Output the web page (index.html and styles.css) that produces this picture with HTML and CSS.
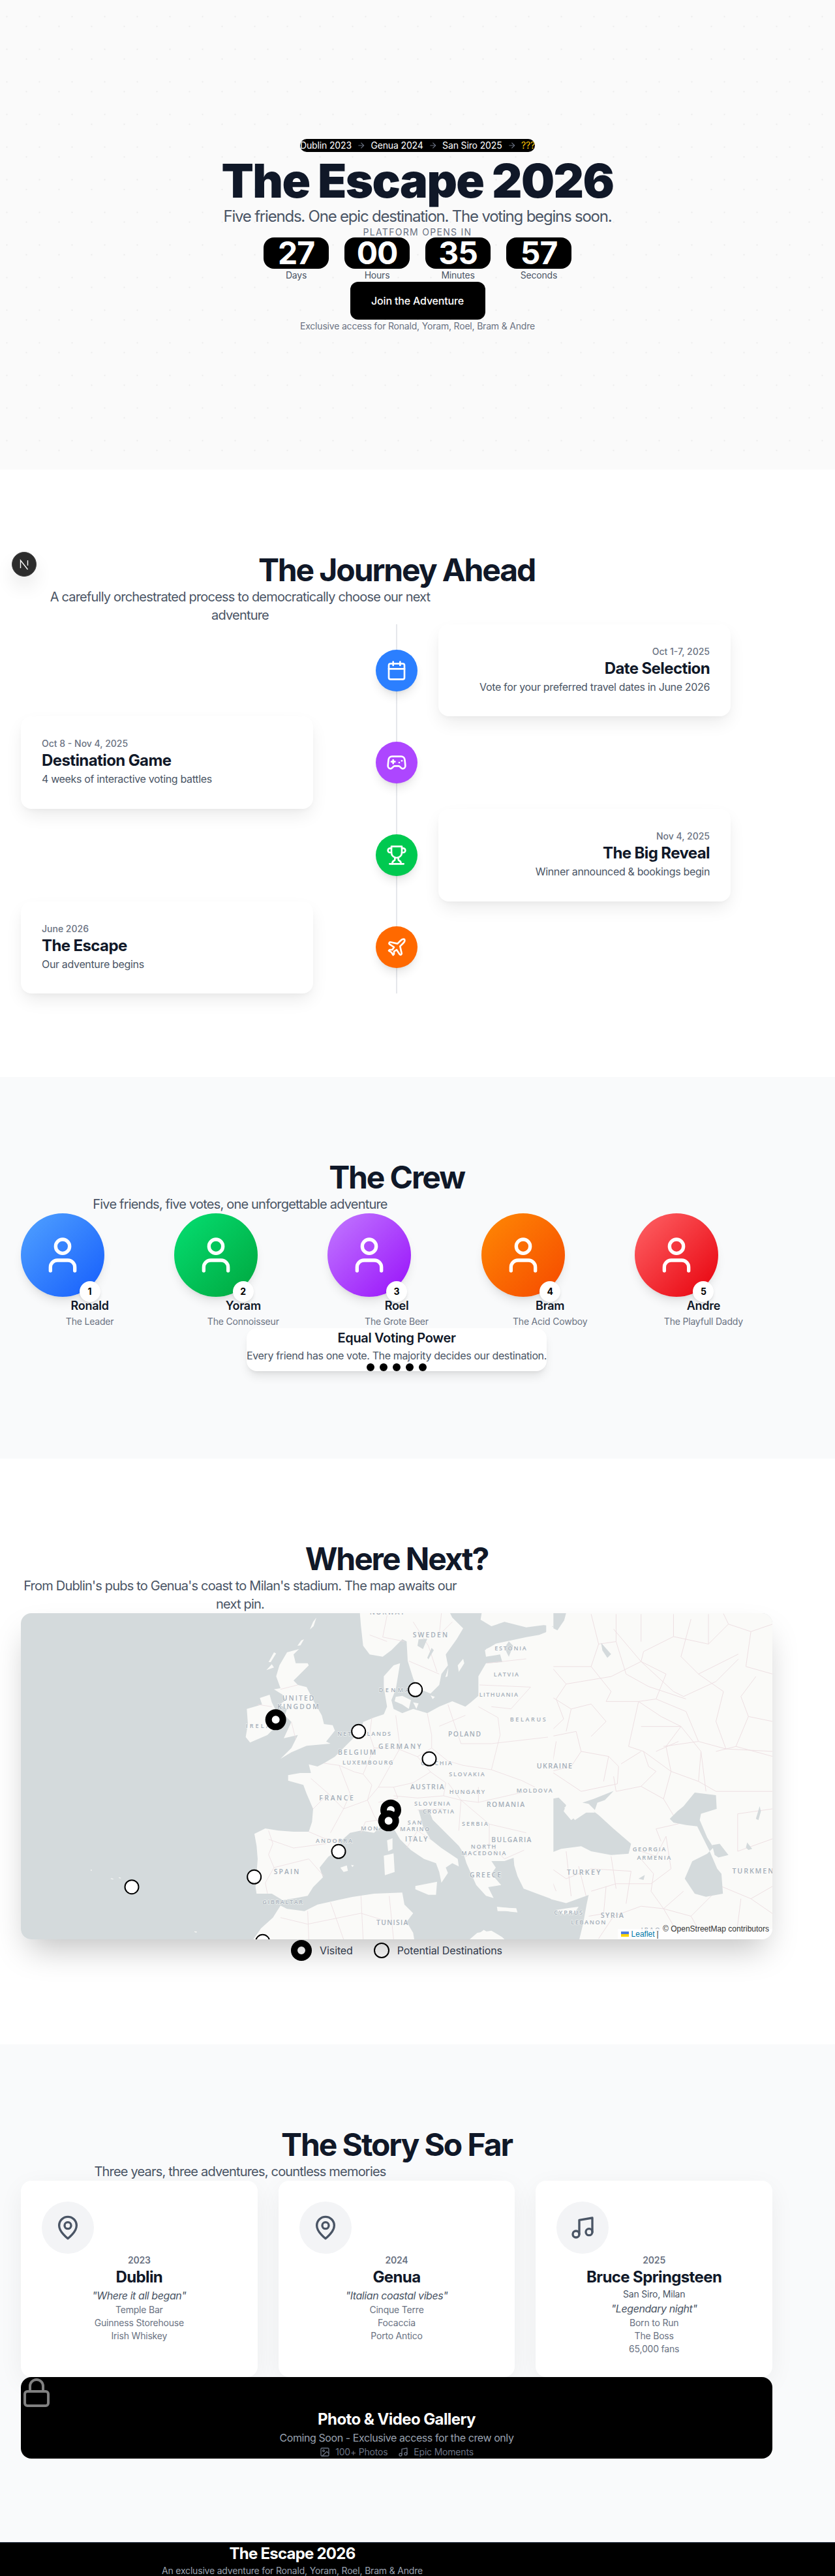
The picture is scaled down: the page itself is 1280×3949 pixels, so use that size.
FILE: index.html
```html
<!DOCTYPE html>
<html lang="en">
<head>
<meta charset="utf-8">
<title>The Escape 2026</title>
<link rel="stylesheet" href="styles.css">
</head>
<body>
<section class="hero">
  <div class="trail">
    <span>Dublin 2023</span>
    <svg class="ico arrow" viewBox="0 0 24 24"><path d="M5 12h14"/><path d="m12 5 7 7-7 7"/></svg>
    <span>Genua 2024</span>
    <svg class="ico arrow" viewBox="0 0 24 24"><path d="M5 12h14"/><path d="m12 5 7 7-7 7"/></svg>
    <span>San Siro 2025</span>
    <svg class="ico arrow" viewBox="0 0 24 24"><path d="M5 12h14"/><path d="m12 5 7 7-7 7"/></svg>
    <span class="unknown">???</span>
  </div>
  <h1>The Escape 2026</h1>
  <p class="tagline">Five friends. One epic destination. The voting begins soon.</p>
  <p class="opens">PLATFORM OPENS IN</p>
  <div class="countdown">
    <div class="unit"><div class="num">27</div><div class="unit-label">Days</div></div>
    <div class="unit"><div class="num">00</div><div class="unit-label">Hours</div></div>
    <div class="unit"><div class="num">35</div><div class="unit-label">Minutes</div></div>
    <div class="unit"><div class="num">57</div><div class="unit-label">Seconds</div></div>
  </div>
  <a class="cta">Join the Adventure</a>
  <p class="exclusive">Exclusive access for Ronald, Yoram, Roel, Bram &amp; Andre</p>
</section>

<div class="next-badge">
  <svg viewBox="0 0 38 38"><path d="M13.5 25V13l11 14M24.5 13v8" /></svg>
</div>

<section class="section journey">
  <h2>The Journey Ahead</h2>
  <p class="sub">A carefully orchestrated process to democratically choose our next adventure</p>
  <div class="timeline">
    <div class="row">
      <div class="blank"></div>
      <div class="node n-blue"><svg class="ico" viewBox="0 0 24 24"><path d="M8 2v4"/><path d="M16 2v4"/><rect width="18" height="18" x="3" y="4" rx="2"/><path d="M3 10h18"/></svg></div>
      <div class="tcard right"><div class="tdate">Oct 1-7, 2025</div><h3>Date Selection</h3><p>Vote for your preferred travel dates in June 2026</p></div>
    </div>
    <div class="row">
      <div class="tcard"><div class="tdate">Oct 8 - Nov 4, 2025</div><h3>Destination Game</h3><p>4 weeks of interactive voting battles</p></div>
      <div class="node n-purple"><svg class="ico" viewBox="0 0 24 24"><path d="M6 11h4"/><path d="M8 9v4"/><path d="M15 12h.01"/><path d="M18 10h.01"/><path d="M17.32 5H6.68a4 4 0 0 0-3.978 3.59c-.006.052-.01.101-.017.152C2.604 9.416 2 14.456 2 16a3 3 0 0 0 3 3c1 0 1.5-.5 2-1l1.414-1.414A2 2 0 0 1 9.828 16h4.344a2 2 0 0 1 1.414.586L17 18c.5.5 1 1 2 1a3 3 0 0 0 3-3c0-1.545-.604-6.584-.685-7.258-.007-.05-.011-.1-.017-.151A4 4 0 0 0 17.32 5z"/></svg></div>
      <div class="blank"></div>
    </div>
    <div class="row">
      <div class="blank"></div>
      <div class="node n-green"><svg class="ico" viewBox="0 0 24 24"><path d="M6 9H4.5a2.5 2.5 0 0 1 0-5H6"/><path d="M18 9h1.5a2.5 2.5 0 0 0 0-5H18"/><path d="M4 22h16"/><path d="M10 14.66V17c0 .55-.47.98-.97 1.21C7.85 18.75 7 20.24 7 22"/><path d="M14 14.66V17c0 .55.47.98.97 1.21C16.15 18.75 17 20.24 17 22"/><path d="M18 2H6v7a6 6 0 0 0 12 0V2Z"/></svg></div>
      <div class="tcard right"><div class="tdate">Nov 4, 2025</div><h3>The Big Reveal</h3><p>Winner announced &amp; bookings begin</p></div>
    </div>
    <div class="row">
      <div class="tcard"><div class="tdate">June 2026</div><h3>The Escape</h3><p>Our adventure begins</p></div>
      <div class="node n-orange"><svg class="ico" viewBox="0 0 24 24"><path d="M17.8 19.2 16 11l3.5-3.5C21 6 21.5 4 21 3c-1-.5-3 0-4.5 1.5L13 8 4.8 6.2c-.5-.1-.9.1-1.1.5l-.3.5c-.2.5-.1 1 .3 1.3L9 12l-2 3H4l-1 1 3 2 2 3 1-1v-3l3-2 3.5 5.3c.3.4.8.5 1.3.3l.5-.2c.4-.3.6-.7.5-1.2z"/></svg></div>
      <div class="blank"></div>
    </div>
  </div>
</section>

<section class="section tint">
  <h2>The Crew</h2>
  <p class="sub">Five friends, five votes, one unforgettable adventure</p>
  <div class="crew">
    <div class="member"><div class="avatar a-blue"><svg class="ico" viewBox="0 0 24 24"><path d="M19 21v-2a4 4 0 0 0-4-4H9a4 4 0 0 0-4 4v2"/><circle cx="12" cy="7" r="4"/></svg></div><div class="badge">1</div><div class="mname">Ronald</div><div class="mrole">The Leader</div></div>
    <div class="member"><div class="avatar a-green"><svg class="ico" viewBox="0 0 24 24"><path d="M19 21v-2a4 4 0 0 0-4-4H9a4 4 0 0 0-4 4v2"/><circle cx="12" cy="7" r="4"/></svg></div><div class="badge">2</div><div class="mname">Yoram</div><div class="mrole">The Connoisseur</div></div>
    <div class="member"><div class="avatar a-purple"><svg class="ico" viewBox="0 0 24 24"><path d="M19 21v-2a4 4 0 0 0-4-4H9a4 4 0 0 0-4 4v2"/><circle cx="12" cy="7" r="4"/></svg></div><div class="badge">3</div><div class="mname">Roel</div><div class="mrole">The Grote Beer</div></div>
    <div class="member"><div class="avatar a-orange"><svg class="ico" viewBox="0 0 24 24"><path d="M19 21v-2a4 4 0 0 0-4-4H9a4 4 0 0 0-4 4v2"/><circle cx="12" cy="7" r="4"/></svg></div><div class="badge">4</div><div class="mname">Bram</div><div class="mrole">The Acid Cowboy</div></div>
    <div class="member"><div class="avatar a-red"><svg class="ico" viewBox="0 0 24 24"><path d="M19 21v-2a4 4 0 0 0-4-4H9a4 4 0 0 0-4 4v2"/><circle cx="12" cy="7" r="4"/></svg></div><div class="badge">5</div><div class="mname">Andre</div><div class="mrole">The Playfull Daddy</div></div>
  </div>
  <div class="voting">
    <h3>Equal Voting Power</h3>
    <p>Every friend has one vote. The majority decides our destination.</p>
    <div class="dots"><i></i><i></i><i></i><i></i><i></i></div>
  </div>
</section>

<section class="section">
  <h2>Where Next?</h2>
  <p class="sub">From Dublin's pubs to Genua's coast to Milan's stadium. The map awaits our next pin.</p>
  <div class="map">
    <svg class="map-svg" viewBox="0 0 1152 500">
      <rect class="water" width="1152" height="500"/>
      <!-- eastern half, traced at 0.3827 scale -->
      <g transform="translate(568,-33) scale(.3827)">
        <rect class="land" x="620" y="80" width="920" height="1320"/>
        <g class="lines">
          <path d="M627 570 690 510 660 430 700 370 640 300 600 250"/><path d="M640 580 740 560 760 640 870 660 910 700 905 770 760 800"/>
          <path d="M700 370 880 340 1000 280 1010 240 1130 180"/><path d="M860 440 990 440 1080 500 1160 540 1100 620 1120 720"/><path d="M1090 620 1230 600 1340 630 1527 640"/>
          <path d="M640 300 800 300 880 400 860 440"/><path d="M890 150 1000 280 1130 400 1170 420 1300 360 1390 270"/>
          <path d="M990 440 950 620 1010 640 1030 700 1060 720 1000 780"/><path d="M1120 720 1090 830 1150 930"/><path d="M1300 640 1380 620 1430 500 1400 420 1460 340"/>
          <path d="M1240 640 1260 800"/><path d="M1380 620 1527 660"/><path d="M1387 890 1527 870"/><path d="M1387 890 1387 1040 1527 990"/><path d="M1300 800 1527 800"/>
          <path d="M1000 1040 1060 1060 1100 980"/><path d="M990 1060 1050 1130 1040 1200 1090 1270 1170 1200"/><path d="M800 1200 900 1170 1040 1170"/><path d="M1320 1180 1440 1230 1527 1290"/>
          <path d="M860 1180 850 1290 790 1300"/><path d="M830 1390 890 1300 1000 1260 1090 1270 1160 1390"/><path d="M600 1080 700 1150 800 1110 960 1120"/><path d="M700 1040 720 1220"/><path d="M880 1060 900 1190"/>
          <path d="M900 200 940 330 1030 380 1180 430"/><path d="M1200 110 1160 260 1230 330 1390 250"/><path d="M1000 540 1160 540 1240 640"/>
          <path d="M640 420 720 470 800 450 860 520 800 580"/><path d="M720 470 700 560"/><path d="M800 300 830 210 900 200"/><path d="M1000 280 1100 330 1060 430 990 440"/><path d="M1060 430 1180 480 1230 600"/><path d="M1230 330 1330 400 1300 520 1340 630"/>
          <path d="M1130 180 1270 210 1350 130 1440 160 1527 130"/><path d="M1350 130 1330 88"/><path d="M1440 160 1420 300 1527 330"/><path d="M1000 90 1000 200"/><path d="M800 90 830 210"/><path d="M900 90 900 200"/><path d="M1130 90 1130 180"/><path d="M1270 90 1270 210"/>
          <path d="M1430 500 1527 520"/><path d="M1120 720 1230 760 1300 800"/><path d="M1230 760 1240 640"/><path d="M1090 830 1000 780 900 800 890 740"/><path d="M1150 930 1060 950 1080 1000"/><path d="M660 600 640 720 700 760 760 800"/><path d="M760 640 720 700 640 720"/><path d="M870 660 850 760"/>
          <path d="M1000 640 920 690"/><path d="M620 1100 660 1200"/><path d="M750 1100 780 1220"/><path d="M960 1120 940 1250"/><path d="M1040 1170 1120 1110 1100 980"/><path d="M1090 1270 1200 1300 1320 1180"/><path d="M1200 1300 1250 1390"/><path d="M1400 1230 1380 1390"/><path d="M1440 1230 1527 1180"/><path d="M1150 600 1060 640"/><path d="M1010 640 1120 720"/>
        </g>
        <path class="water" d="M555 1000 575 930 590 900 640 830 670 825 700 855 690 880 720 915 760 885 810 880 830 895 890 950 960 1010 950 1050 880 1055 800 1040 760 1020 680 1030 630 1050 560 1040Z"/>
        <path class="land" d="M692 865 740 845 790 855 815 885 780 885 735 915 715 890Z"/>
        <path class="water" d="M765 845 810 830 890 798 855 835 825 845 815 875 790 850Z"/>
        <path class="water" d="M1115 910 1145 880 1170 860 1215 805 1300 815 1303 870 1240 890 1235 915 1265 985 1290 1025 1265 1050 1205 1080 1175 1150 1215 1210 1260 1222 1328 1210 1322 1130 1305 1110 1275 1040 1225 940 1180 935 1130 925Z"/>
        <path class="water" d="M1285 1015 1315 1010 1350 1055 1310 1065 1295 1055Z"/>
        <path class="water" d="M1425 1005 1445 1030 1430 1035 1420 1025Z"/>
        <path class="water" d="M1475 860 1460 910 1470 915 1480 880Z"/>
        <path class="water" d="M640 85 700 85 692 115 665 155 645 145Z"/>
        <path class="water" d="M840 205 880 250 865 265 845 235Z"/>
        <path class="water" d="M530 1068 600 1058 590 1075 540 1082Z"/>
        <path class="water" d="M600 1195 640 1232 700 1248 790 1215 782 1252 768 1330 752 1396 480 1396 480 1195Z"/>
        <path class="land" d="M660 1275 705 1268 750 1262 735 1285 690 1292Z"/>
        <path class="land" d="M425 1265 500 1268 505 1285 460 1280 425 1280Z"/>
        <path class="land" d="M315 1396 370 1355 440 1396Z"/>
        <path class="water" d="M990 1150 1015 1135 1010 1155Z"/>
      </g>
      <!-- western half, traced at one third scale -->
      <g transform="translate(308,0) scale(.33333)">
        <path class="land" d="M1525 60 1490 88 1460 100 1400 110 1330 125 1260 140 1210 170 1215 200 1280 190 1290 225 1215 230 1180 290 1180 380 1145 410 1120 430 1060 405 1000 430 945 460 880 440 830 460 790 440 780 400 800 350 810 290 820 230 790 240 745 290 745 340 760 430 745 465 700 480 650 500 640 540 570 610 520 660 470 690 440 705 400 695 410 735 360 735 305 745 305 770 375 790 390 830 420 900 415 960 400 1005 330 1005 260 1000 200 990 150 1015 160 1070 165 1130 155 1260 160 1290 230 1290 280 1320 340 1310 395 1300 420 1260 465 1215 450 1170 490 1120 540 1090 545 1050 590 1010 640 1000 700 1010 730 980 790 990 820 1040 870 1090 930 1130 985 1150 1000 1190 1010 1240 1040 1195 1030 1170 1060 1150 1090 1165 1085 1130 1010 1080 960 1040 925 980 915 940 905 905 950 900 970 950 1030 1010 1090 1070 1110 1100 1125 1150 1170 1250 1215 1300 1250 1310 1225 1260 1285 1250 1240 1200 1260 1170 1240 1140 1300 1140 1342 1125 1345 1160 1360 1210 1388 1267 1450 1290 1525 1318Z"/>
        <path class="land" d="M1195 0 1190 30 1240 60 1300 40 1400 65 1480 55 1525 60 1525 0Z"/>
        <path class="land" d="M635 0 640 60 650 150 680 190 740 200 780 170 830 120 850 130 855 220 880 300 900 345 960 370 1000 330 1010 280 1040 240 1030 190 1080 120 1110 70 1060 20 1050 0Z"/>
        <path class="land" d="M110 570 120 510 115 440 185 420 175 390 220 375 230 410 255 460 248 490 240 530 210 560 130 595Z"/>
        <path class="land" d="M355 165 300 180 265 240 250 290 270 345 240 350 280 375 295 400 265 420 300 440 290 470 320 500 285 575 350 560 320 620 270 670 320 640 390 610 500 600 480 590 520 540 510 515 470 510 460 470 420 400 390 340 350 330 330 310 400 240 395 230 340 230 330 190Z"/>
        <path class="land" d="M890 1255 990 1235 985 1295 950 1295 890 1270Z"/>
        <path class="land" d="M745 1115 790 1105 795 1190 750 1205Z"/>
        <path class="land" d="M760 1045 785 1035 785 1085 765 1095Z"/>
        <path class="land" d="M545 1170 575 1160 580 1185 560 1190Z"/>
        <path class="land" d="M595 1157 608 1160 600 1168Z"/>
        <path class="land" d="M1085 240 1110 210 1115 230 1090 270Z"/>
        <path class="land" d="M1028 295 1042 250 1038 290Z"/>
        <path class="land" d="M1215 165 1250 150 1255 165 1220 195Z"/>
        <path class="land" d="M830 380 870 400 860 440 830 420 795 405 800 385Z"/>
        <path class="land" d="M880 410 905 415 895 440Z"/>
        <path class="land" d="M960 378 980 385 970 395Z"/>
        <path class="land" d="M405 75 420 40 435 20 422 60Z"/>
        <path class="land" d="M348 150 365 125 378 120 362 148Z"/>
        <path class="land" d="M215 225 240 180 250 185 225 225Z"/>
        <path class="land" d="M205 262 230 235 240 250Z"/>
        <path class="land" d="M145 1500 180 1450 235 1400 270 1345 300 1360 380 1370 440 1340 530 1320 600 1305 700 1290 830 1285 840 1340 880 1380 850 1420 880 1470 885 1500Z"/>
        <path class="land" d="M1140 1500 1175 1470 1240 1460 1290 1490 1300 1500Z"/>
        <path class="land" d="M1265 1350 1340 1358 1345 1375 1300 1368 1268 1365Z"/>
        <path class="land" d="M-603 1180h5v4h-5Z"/><path class="land" d="M-510 1219l12 3-2 3-11-3Z"/><path class="land" d="M-472 1214l9 4-4 2-7-3Z"/><path class="land" d="M-126 1463l12 2-3 4-9-3Z"/>
        <g class="lines">
          <path d="M400 1005 470 1035 545 1050"/><path d="M215 1000 235 1060 215 1110 240 1170 200 1240 210 1290"/><path d="M215 1040 330 1080 480 1060"/><path d="M240 1170 400 1130 470 1210"/>
          <path d="M470 690 540 700 610 730 650 740 690 790 670 860 700 930 730 980"/><path d="M410 760 490 830 420 900"/><path d="M490 830 560 900 500 1010"/><path d="M560 900 670 860"/><path d="M540 700 590 830 560 900"/>
          <path d="M690 480 680 560 700 620 650 740"/><path d="M945 460 965 560 965 620 900 660 960 730 880 780 790 800"/><path d="M700 620 800 620 900 660"/><path d="M800 470 820 620 720 800"/>
          <path d="M670 860 720 800 790 800 810 850 720 870"/><path d="M790 840 900 850 1020 840 1030 780 960 730"/><path d="M965 620 1040 680 1110 700 1240 720"/><path d="M1180 430 1270 480 1280 560 1240 720"/>
          <path d="M1185 330 1420 340"/><path d="M1220 230 1400 210"/><path d="M1240 430 1330 440 1420 340"/><path d="M1240 600 1500 570"/><path d="M1240 720 1380 770 1440 800"/><path d="M1180 800 1180 870 1100 860 1040 780"/>
          <path d="M1100 860 1230 970 1400 1010"/><path d="M1230 970 1230 1060 1120 1120"/><path d="M1230 1060 1300 1130 1390 1090"/><path d="M1020 840 1100 860 1090 1000"/><path d="M1180 870 1400 820"/><path d="M900 905 1020 900"/>
          <path d="M395 1370 400 1500"/><path d="M770 1300 790 1500"/><path d="M270 1400 395 1430 640 1380 770 1420"/><path d="M500 1330 560 1500"/><path d="M640 1300 650 1500"/>
          <path d="M760 10 740 110 840 130"/><path d="M680 100 760 130"/><path d="M880 40 950 150 990 270"/><path d="M860 220 1000 280"/><path d="M1010 0 1000 100 1060 40"/>
          <path d="M270 350 350 330"/><path d="M320 500 340 580"/><path d="M165 420 230 430"/><path d="M1040 420 1100 600 1240 600"/><path d="M1000 520 1120 470"/><path d="M850 1080 900 1000 960 1040"/><path d="M640 1010 660 960 730 950"/>
        </g>
        <path class="water" d="M905 120 945 118 925 165 900 150Z"/>
        <path class="water" d="M965 160 975 170 950 212 945 205Z"/>
        <path class="water" d="M1300 160 1320 130 1340 150 1320 200Z"/>
        <g class="labels">
          <text x="680" y="6" textLength="160">NORWAY</text>
          <text x="878" y="110" textLength="160">SWEDEN</text>
          <text class="s" x="1255" y="170" textLength="145">ESTONIA</text>
          <text class="s" x="1250" y="291" textLength="115">LATVIA</text>
          <text class="s" x="1184" y="384" textLength="178">LITHUANIA</text>
          <text class="s" x="1325" y="497" textLength="165">BELARUS</text>
          <text class="s" x="722" y="363" textLength="195">DENMARK</text>
          <text x="278" y="403" textLength="146">UNITED</text>
          <text x="256" y="441" textLength="190">KINGDOM</text>
          <text class="s" x="110" y="527" textLength="172">IRELAND</text>
          <text class="s" x="532" y="563" textLength="245">NETHERLANDS</text>
          <text x="720" y="625" textLength="197">GERMANY</text>
          <text x="534" y="652" textLength="175">BELGIUM</text>
          <text class="s" x="555" y="695" textLength="232">LUXEMBOURG</text>
          <text x="1041" y="566" textLength="150">POLAND</text>
          <text class="s" x="915" y="699" textLength="143">CZECHIA</text>
          <text class="s" x="1045" y="751" textLength="163">SLOVAKIA</text>
          <text x="867" y="811" textLength="155">AUSTRIA</text>
          <text class="s" x="1046" y="831" textLength="163">HUNGARY</text>
          <text class="s" x="1355" y="826" textLength="165">MOLDOVA</text>
          <text x="448" y="861" textLength="157">FRANCE</text>
          <text class="s" x="885" y="884" textLength="165">SLOVENIA</text>
          <text class="s" x="924" y="921" textLength="144">CROATIA</text>
          <text x="1218" y="891" textLength="174">ROMANIA</text>
          <text class="s" x="1104" y="978" textLength="120">SERBIA</text>
          <text class="s" x="854" y="973" textLength="66">SAN</text>
          <text class="s" x="820" y="1003" textLength="135">MARINO</text>
          <text class="s" x="640" y="999" textLength="150">MONACO</text>
          <text x="843" y="1050" textLength="103">ITALY</text>
          <text class="s" x="432" y="1055" textLength="168">ANDORRA</text>
          <text x="239" y="1201" textLength="116">SPAIN</text>
          <text x="1240" y="1052" textLength="183">BULGARIA</text>
          <text class="s" x="1145" y="1082" textLength="116">NORTH</text>
          <text class="s" x="1102" y="1112" textLength="204">MACEDONIA</text>
          <text x="1140" y="1215" textLength="144">GREECE</text>
          <text class="s" x="187" y="1338" textLength="185">GIBRALTAR</text>
          <text x="711" y="1434" textLength="145">TUNISIA</text>
        </g>
        <g class="pins">
          <circle cx="890" cy="352" r="31.5"/>
          <circle cx="629" cy="544" r="31.5"/>
          <circle cx="954" cy="670" r="31.5"/>
          <circle cx="537" cy="1096" r="31.5"/>
          <circle cx="149" cy="1213" r="31.5"/>
          <circle cx="188" cy="1510" r="31.5"/>
          <circle cx="-414" cy="1259" r="31.5"/>
        </g>
        <g class="pins visited">
          <circle cx="248" cy="490" r="33"/>
          <circle cx="777" cy="905" r="33"/>
          <circle cx="767" cy="955" r="33"/>
        </g>
      </g>
      <g transform="translate(568,-33) scale(.3827)" class="labels east">
        <text x="582" y="707" textLength="142">UKRAINE</text>
        <text x="703" y="1133" textLength="135">TURKEY</text>
        <text class="s" x="966" y="1040" textLength="132">GEORGIA</text>
        <text class="s" x="984" y="1075" textLength="135">ARMENIA</text>
        <text class="s" x="651" y="1293" textLength="115">CYPRUS</text>
        <text x="838" y="1306" textLength="92">SYRIA</text>
        <text class="s" x="719" y="1333" textLength="139">LEBANON</text>
        <text class="s" x="1000" y="1362" textLength="75">IRAQ</text>
        <text x="1365" y="1130" textLength="270">TURKMENISTAN</text>
      </g>
    </svg>
    <div class="attrib">
      <svg class="flag" viewBox="0 0 12 8"><rect width="12" height="4" fill="#4C7BE1"/><rect y="4" width="12" height="4" fill="#FFD500"/></svg>
      <a>Leaflet</a> <span class="sep">|</span> © OpenStreetMap contributors
    </div>
  </div>
  <div class="legend">
    <span class="ring ring-visited"></span><span class="ltext">Visited</span>
    <span class="ring ring-open"></span><span class="ltext">Potential Destinations</span>
  </div>
</section>

<section class="section tint">
  <h2>The Story So Far</h2>
  <p class="sub">Three years, three adventures, countless memories</p>
  <div class="story">
    <article class="scard">
      <div class="sicon"><svg class="ico" viewBox="0 0 24 24"><path d="M20 10c0 6-8 12-8 12s-8-6-8-12a8 8 0 0 1 16 0Z"/><circle cx="12" cy="10" r="3"/></svg></div>
      <div class="syear">2023</div><h3>Dublin</h3><div class="squote">"Where it all began"</div>
      <div class="sitem">Temple Bar</div><div class="sitem">Guinness Storehouse</div><div class="sitem">Irish Whiskey</div>
    </article>
    <article class="scard">
      <div class="sicon"><svg class="ico" viewBox="0 0 24 24"><path d="M20 10c0 6-8 12-8 12s-8-6-8-12a8 8 0 0 1 16 0Z"/><circle cx="12" cy="10" r="3"/></svg></div>
      <div class="syear">2024</div><h3>Genua</h3><div class="squote">"Italian coastal vibes"</div>
      <div class="sitem">Cinque Terre</div><div class="sitem">Focaccia</div><div class="sitem">Porto Antico</div>
    </article>
    <article class="scard">
      <div class="sicon"><svg class="ico" viewBox="0 0 24 24"><path d="M9 18V5l12-2v13"/><circle cx="6" cy="18" r="3"/><circle cx="18" cy="16" r="3"/></svg></div>
      <div class="syear">2025</div><h3>Bruce Springsteen</h3><div class="splace">San Siro, Milan</div><div class="squote">"Legendary night"</div>
      <div class="sitem">Born to Run</div><div class="sitem">The Boss</div><div class="sitem">65,000 fans</div>
    </article>
  </div>
  <div class="gallery">
    <svg class="ico lock" viewBox="0 0 24 24"><rect width="18" height="11" x="3" y="11" rx="2"/><path d="M7 11V7a5 5 0 0 1 10 0v4"/></svg>
    <h3>Photo &amp; Video Gallery</h3>
    <p>Coming Soon - Exclusive access for the crew only</p>
    <div class="gmeta">
      <span><svg class="ico" viewBox="0 0 24 24"><rect width="18" height="18" x="3" y="3" rx="2"/><circle cx="9" cy="9" r="2"/><path d="m21 15-3.086-3.086a2 2 0 0 0-2.828 0L6 21"/></svg>100+ Photos</span>
      <span><svg class="ico" viewBox="0 0 24 24"><path d="M9 18V5l12-2v13"/><circle cx="6" cy="18" r="3"/><circle cx="18" cy="16" r="3"/></svg>Epic Moments</span>
    </div>
  </div>
</section>

<footer class="footer">
  <div class="finner">
    <h3>The Escape 2026</h3>
    <p>An exclusive adventure for Ronald, Yoram, Roel, Bram &amp; Andre</p>
  </div>
</footer>
</body>
</html>
```
FILE: styles.css
```css
* { box-sizing: border-box; margin: 0; padding: 0; }
html, body { background: #fff; }
body { position: relative; font-family: Inter, "Liberation Sans", sans-serif; color: #101828; line-height: 1.5; }
h1, h2, h3 { color: #101828; }
.ico { fill: none; stroke: currentColor; stroke-width: 2; stroke-linecap: round; stroke-linejoin: round; display: block; }

.hero {
  height: 720px; padding-top: 3px; display: flex; flex-direction: column; align-items: center; justify-content: center;
  background-color: #fafafa;
  background-image: radial-gradient(circle, #ececec 1px, transparent 1.3px), radial-gradient(circle, #ececec 1px, transparent 1.3px);
  background-size: 50px 50px;
  background-position: 15.5px 15.5px, -14.5px .5px;
}
.trail { width: 360px; display: flex; align-items: center; justify-content: center; gap: 8px; height: 20px; background: #000; color: #fff; border-radius: 999px; font-size: 14px; line-height: 20px; letter-spacing: -.14px; white-space: nowrap; overflow: hidden; }
.arrow { width: 14px; height: 14px; color: #6a7282; }
.unknown { color: #fdc700; }
h1 { margin-top: 4px; font-size: 72px; line-height: 1.1; font-weight: 900; letter-spacing: -1.6px; }
.tagline { font-size: 24px; line-height: 32px; letter-spacing: -1.21px; color: #4a5565; }
.opens { font-size: 14px; line-height: 16px; letter-spacing: 1.3px; color: #6a7282; }
.countdown { display: flex; gap: 24px; }
.unit { width: 100px; text-align: center; }
.num { height: 48px; background: #000; color: #fff; border-radius: 16px; font-size: 48px; line-height: 48px; font-weight: 700; letter-spacing: -1px; }
.unit-label { font-size: 14px; line-height: 20px; letter-spacing: -.2px; color: #4a5565; }
.cta { width: 207px; height: 58px; display: flex; align-items: center; justify-content: center; background: #000; color: #fff; border-radius: 12px; font-size: 16px; font-weight: 500; letter-spacing: -.17px; }
.exclusive { font-size: 14px; line-height: 20px; letter-spacing: -.19px; color: #6a7282; }

.next-badge { position: absolute; left: 18px; top: 846px; width: 38px; height: 38px; border-radius: 50%; background: #2d2d2d; border: 1px solid #444; box-shadow: 0 16px 32px -8px rgba(0,0,0,.24); }
.next-badge svg { display: block; width: 38px; height: 38px; margin: -1px; fill: none; stroke: #fff; stroke-width: 1.4; }

.section { padding: 128px 96px 128px 32px; background: #fff; }
.tint { background: #f9fafb; }
h2 { font-size: 48px; line-height: 1.1; font-weight: 700; letter-spacing: -2.1px; text-align: center; }
.sub { width: 672px; font-size: 20px; line-height: 28px; letter-spacing: -.8px; color: #4a5565; text-align: center; }

.timeline { position: relative; }
.timeline::before { content: ""; position: absolute; left: 575px; top: 0; bottom: 0; width: 2px; background: #e5e7eb; }
.row { position: relative; display: grid; grid-template-columns: 544px 64px 544px; align-items: center; }
.tcard { width: 448px; padding: 32px 32px 33.6px; background: #fff; border-radius: 16px; box-shadow: 0 12px 28px -4px rgba(0,0,0,.09), 0 4px 10px -4px rgba(0,0,0,.05); }
.tcard.right { margin-left: 32px; text-align: right; }
.tdate { font-size: 14px; line-height: 20px; font-weight: 500; color: #6a7282; }
.tcard h3 { font-size: 24px; line-height: 32px; font-weight: 700; letter-spacing: -.6px; }
.tcard p { font-size: 16px; line-height: 24px; letter-spacing: -.34px; color: #4a5565; }
.node { width: 64px; height: 64px; border-radius: 50%; display: flex; align-items: center; justify-content: center; color: #fff; box-shadow: 0 10px 15px -3px rgba(0,0,0,.1), 0 4px 6px -4px rgba(0,0,0,.1); }
.node .ico { width: 32px; height: 32px; }
.n-blue { background: #2b7fff; }
.n-purple { background: #ad46ff; }
.n-green { background: #00c950; }
.n-orange { background: #ff6900; }

.crew { display: grid; grid-template-columns: repeat(5, 1fr); gap: 24px; }
.member { position: relative; text-align: center; }
.avatar { width: 128px; height: 128px; border-radius: 50%; display: flex; align-items: center; justify-content: center; color: #fff; box-shadow: 0 10px 15px -3px rgba(0,0,0,.1), 0 4px 6px -4px rgba(0,0,0,.1); }
.avatar .ico { width: 64px; height: 64px; }
.a-blue { background: linear-gradient(135deg, #51a2ff, #155dfc); }
.a-green { background: linear-gradient(135deg, #05df72, #00a63e); }
.a-purple { background: linear-gradient(135deg, #c27aff, #9810fa); }
.a-orange { background: linear-gradient(135deg, #ff8904, #f54900); }
.a-red { background: linear-gradient(135deg, #ff6467, #e7000b); }
.badge { position: absolute; left: 50%; top: 104px; width: 32px; height: 32px; margin-left: -16px; border-radius: 50%; background: #fff; font-size: 14px; line-height: 32px; font-weight: 700; color: #000; box-shadow: 0 4px 6px -1px rgba(0,0,0,.1), 0 2px 4px -2px rgba(0,0,0,.1); }
.mname { font-size: 18px; line-height: 28px; font-weight: 600; letter-spacing: -.3px; color: #101828; }
.mrole { font-size: 14px; line-height: 20px; letter-spacing: -.2px; color: #6a7282; }
.voting { width: fit-content; margin: 0 auto 6px; background: #fff; border-radius: 16px; text-align: center; box-shadow: 0 10px 15px -3px rgba(0,0,0,.1), 0 4px 6px -4px rgba(0,0,0,.1); }
.voting h3 { font-size: 20px; line-height: 30px; font-weight: 600; letter-spacing: -.34px; }
.voting p { font-size: 16px; line-height: 24px; letter-spacing: -.37px; color: #4a5565; }
.dots { display: flex; justify-content: center; gap: 8px; }
.dots i { width: 12px; height: 12px; border-radius: 50%; background: #000; }

.map { position: relative; height: 500px; border-radius: 16px; overflow: hidden; box-shadow: 0 25px 50px -12px rgba(0,0,0,.25); }
.map-svg { display: block; width: 100%; height: 100%; }
.water { fill: #d4dadc; }
.land { fill: #fafaf8; }
.lines path { fill: none; stroke: #eddfe2; stroke-width: 2.6; stroke-linejoin: round; }
.labels text { font-family: "Open Sans", Inter, sans-serif; font-size: 31px; font-weight: 600; fill: #a4aeb9; stroke: #fafaf8; stroke-width: 3px; paint-order: stroke; }
.labels text.s { font-size: 27px; }
.east text { font-size: 28px; }
.east text.s { font-size: 24px; }
.pins circle { fill: #fff; stroke: #000; stroke-width: 6px; }
.visited circle { stroke-width: 30px; }
.attrib { position: absolute; right: 0; bottom: 0; height: 16px; padding: 0 5px; display: flex; align-items: center; gap: 3px; background: rgba(255,255,255,.8); font-family: "Liberation Sans", Arial, sans-serif; font-size: 12px; line-height: 16px; color: #333; white-space: pre; }
.attrib a { color: #0078a8; }
.flag { width: 12px; height: 8px; margin-right: 1px; }
.legend { height: 33px; padding-top: 1px; display: flex; align-items: center; justify-content: center; }
.ring { border-radius: 50%; background: #fff; border-style: solid; border-color: #000; }
.ring-visited { width: 32px; height: 32px; border-width: 10px; }
.ring-open { width: 24px; height: 24px; border-width: 2px; margin-left: 32px; }
.ltext { margin-left: 12px; font-size: 16px; line-height: 24px; letter-spacing: -.11px; color: #364153; }

.story { display: grid; grid-template-columns: repeat(3, 1fr); gap: 32px; }
.scard { padding: 32px 32px 33px; background: #fff; border-radius: 16px; text-align: center; box-shadow: 0 10px 40px -4px rgba(0,0,0,.07); }
.sicon { width: 80px; height: 80px; border-radius: 50%; background: #f3f4f6; display: flex; align-items: center; justify-content: center; color: #4a5565; }
.sicon .ico { width: 40px; height: 40px; }
.syear { font-size: 14px; line-height: 20px; font-weight: 600; letter-spacing: -.2px; color: #6a7282; }
.scard h3 { font-size: 24px; line-height: 32px; font-weight: 700; letter-spacing: -.62px; }
.squote { font-size: 16px; line-height: 24px; font-style: italic; letter-spacing: -.43px; color: #4a5565; }
.splace { font-size: 14px; line-height: 20px; letter-spacing: -.2px; color: #4a5565; }
.sitem { font-size: 14px; line-height: 20px; letter-spacing: -.2px; color: #6a7282; }
.gallery { position: relative; height: 125px; background: #000; border-radius: 16px; text-align: center; }
.lock { width: 48px; height: 48px; color: #808080; }
.gallery h3 { margin-top: 1px; font-size: 24px; line-height: 32px; font-weight: 700; letter-spacing: -.58px; color: #fff; }
.gallery p { font-size: 16px; line-height: 24px; letter-spacing: -.42px; color: #99a1af; }
.gmeta { display: flex; justify-content: center; gap: 16px; font-size: 14px; line-height: 20px; letter-spacing: -.2px; color: #6a7282; }
.gmeta span { display: flex; align-items: center; gap: 8px; }
.gmeta .ico { width: 16px; height: 16px; }

.footer { height: 52.4px; overflow: hidden; background: #000; border-top: 1px solid #364153; padding: 0 32px; }
.finner { width: 832px; text-align: center; padding-top: 1px; }
.finner h3 { font-size: 24px; line-height: 32px; font-weight: 700; letter-spacing: -.76px; color: #fff; }
.finner p { font-size: 14px; line-height: 20px; letter-spacing: -.19px; color: #99a1af; }
```
